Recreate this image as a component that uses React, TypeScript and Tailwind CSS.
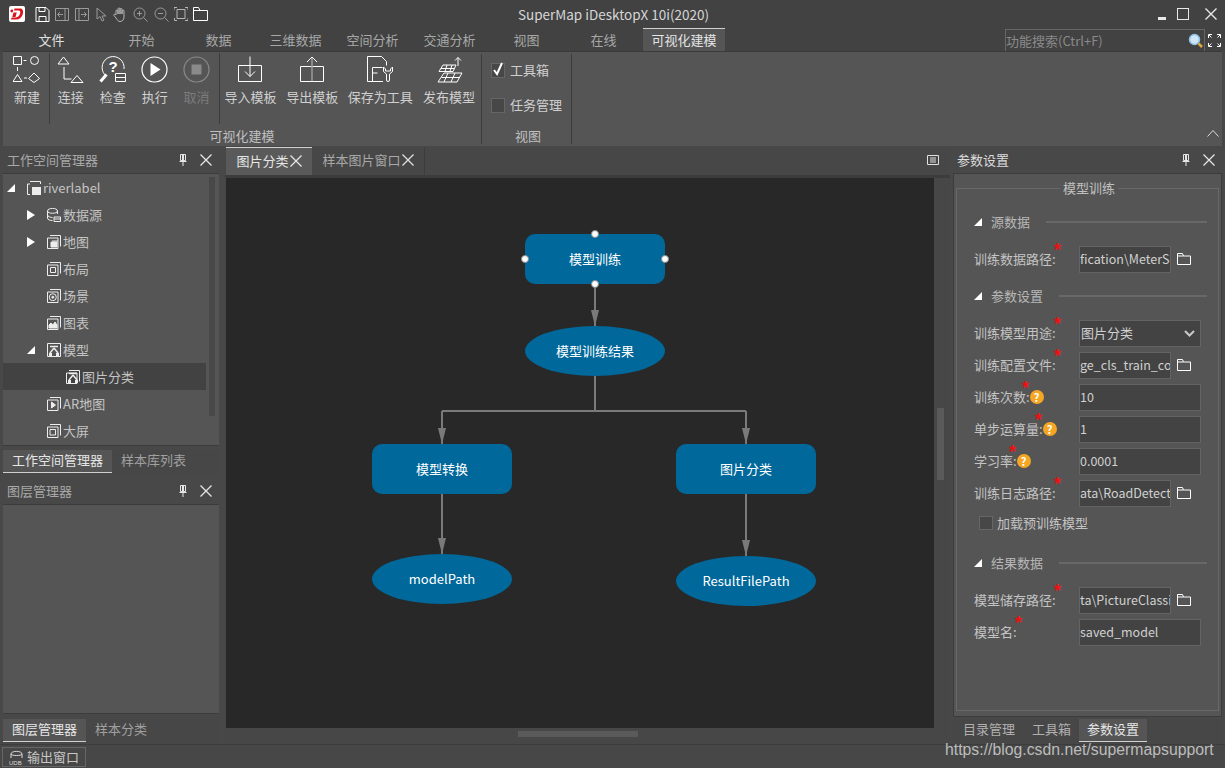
import type { ReactNode } from 'react'

const FONT = 'font-["Noto_Sans_CJK_SC","Microsoft_YaHei",sans-serif]'

const Svg = ({ w, h, children, className = '' }: { w: number; h: number; children: ReactNode; className?: string }) => (
  <svg width={w} height={h} viewBox={`0 0 ${w} ${h}`} fill="none" stroke="currentColor" strokeWidth="1" className={`shrink-0 ${className}`}>
    {children}
  </svg>
)

const Logo = () => (
  <Svg w={16} h={16}>
    <rect x="0" y="0" width="16" height="16" rx="2" fill="#fff" stroke="none" />
    <path d="M5.500 2.500h5.500c3 0 3.500 2.500 2.800 5.500-.8 3.500-3.300 5.500-6.800 5.500H2l.6-2h3.500c2.500 0 4.300-1.500 5-3.800.5-1.800.1-3.200-1.600-3.200H5z" fill="#d9141c" stroke="none" />
    <path d="M4.500 6.500h3.300L6.500 11H3.300z" fill="#d9141c" stroke="none" />
    <circle cx="2.800" cy="5" r="1.400" fill="#d9141c" stroke="none" />
  </Svg>
)

const ToolbarIcons = () => (
  <div className="flex items-center gap-[5px] ml-[10px]">
    <Svg w={15} h={15} className="text-white"><path d="M1 .5h10l3 3v11H1zM4 .5v4h6v-4M4 14.500v-5h7v5" /></Svg>
    <Svg w={15} h={15} className="text-[#9a9a9a]"><path d="M.5 1.500h13v12H.5zM10 1.500v12M8 7.500H2.500M5 5 2.500 7.500 5 10" /></Svg>
    <Svg w={15} h={15} className="text-[#9a9a9a]"><path d="M.5 1.500h13v12H.5zM4 1.500v12M6 7.500h5.500M9 5l2.500 2.500L9 10" /></Svg>
    <Svg w={12} h={15} className="text-[#9a9a9a] ml-[1px]"><path d="M1 1v11l3-2.500 2 4.500 2-1-2-4h4z" /></Svg>
    <Svg w={14} h={15} className="text-[#b5b5b5]"><path d="M3 8V4a1 1 0 0 1 2 0v3V2a1 1 0 0 1 2 0v5V2.500a1 1 0 0 1 2 0V7V4a1 1 0 0 1 2 0v6c0 3-2 4.500-4 4.500S4.500 13 3 11L1 8.500C.5 7 2 6.500 3 8z" /></Svg>
    <Svg w={15} h={15} className="text-[#9a9a9a] ml-[1px]"><circle cx="6.500" cy="6.500" r="5.500" /><path d="m10.500 10.500 4 4M4 6.500h5M6.500 4v5" /></Svg>
    <Svg w={15} h={15} className="text-[#9a9a9a] ml-[1px]"><circle cx="6.500" cy="6.500" r="5.500" /><path d="m10.500 10.500 4 4M4 6.500h5" /></Svg>
    <Svg w={14} h={14} className="text-[#b5b5b5]"><path d="M3 2.500h8v9H3zM0 3V.5h3M11 .5h3V3M14 11v2.500h-3M3 13.500H.5V11" /></Svg>
    <Svg w={15} h={14} className="text-white"><path d="M.5 13.500V.5h5l1.500 3h7.500v10zM.5 3.500H7" /></Svg>
  </div>
)

const TitleBar = () => (
  <div className="h-[28px] flex items-center pl-[9px] relative bg-[#424242]">
    <Logo />
    <ToolbarIcons />
    <div className="flex-1 text-center text-[13.500px] text-[#d6d6d6] mr-[139px]">SuperMap iDesktopX 10i(2020)</div>
    <div className="flex items-center text-[#e8e8e8] pr-[8px]">
      <div className="w-[8px] h-[3px] bg-[#e8e8e8] mt-[8px] mr-[11px]" />
      <div className="w-[12px] h-[12px] border border-[#e8e8e8] mr-[16px]" />
      <Svg w={12} h={12}><path d="m.5.5 11 11M11.500.5l-11 11" strokeWidth="1.400" /></Svg>
    </div>
  </div>
)

const tabs = [
  { label: '文件', cls: 'w-[103px] text-[#e0e0e0]' },
  { label: '开始', cls: 'w-[77px]' },
  { label: '数据', cls: 'w-[77px]' },
  { label: '三维数据', cls: 'w-[77px]' },
  { label: '空间分析', cls: 'w-[77px]' },
  { label: '交通分析', cls: 'w-[77px]' },
  { label: '视图', cls: 'w-[77px]' },
  { label: '在线', cls: 'w-[77px]' },
]

const TabRow = () => (
  <div className="h-[23px] flex items-end bg-[#424242]">
    {tabs.map(t => (
      <div key={t.label} className={`${t.cls} h-[23px] flex items-center justify-center text-[13px] ${t.label === '文件' ? '' : 'text-[#a8a8a8]'}`}>
        {t.label}
      </div>
    ))}
    <div className="ml-[1px] w-[82px] h-[23px] flex items-center justify-center text-[13px] text-[#e4e4e4] bg-[#555555] border-t border-[#d0d0d0]">可视化建模</div>
    <div className="ml-[280px] w-[200px] h-[22px] border-x border-t border-[#666666] flex items-center justify-between pr-[1px] text-[13px] text-[#8a8a8a]">
      功能搜索(Ctrl+F)
      <Svg w={15} h={16}>
        <circle cx="6.500" cy="6.500" r="5" fill="#cfe6f7" stroke="#8fc1e6" strokeWidth="1.500" />
        <path d="m10.500 10.500 3.500 3.500" stroke="#e0a93a" strokeWidth="2.500" />
      </Svg>
    </div>
    <Svg w={13} h={13} className="ml-[3px] mb-[4px] text-white">
      <path d="M.5 4V.5H4M9 .5h3.500V4M12.500 9v3.500H9M4 12.500H.5V9M1 1l2.500 2.500M12 1 9.500 3.500M12 12 9.500 9.500M1 12l2.500-2.500" />
    </Svg>
  </div>
)

const RibbonButton = ({ w, label, icon, dim }: { w: string; label: string; icon: ReactNode; dim?: boolean }) => (
  <div className={`${w} flex flex-col items-center`}>
    <div className="h-[32px] flex items-center justify-center text-white">{icon}</div>
    <div className={`mt-[2px] h-[20px] leading-[20px] text-[13px] whitespace-nowrap ${dim ? 'text-[#7c7c7c]' : 'text-[#d0d0d0]'}`}>{label}</div>
  </div>
)

const Sep = () => <div className="w-[1px] h-[71px] bg-[#3c3c3c] shrink-0" />

const Ribbon = () => (
  <div className="h-[95px] mx-[3px] bg-[#555555] border-t border-[#3a3a3a] flex relative">
    <div className="w-[478px] flex flex-col shrink-0">
      <div className="h-[73px] flex pt-[1px]">
        <RibbonButton w="w-[46px] pl-[2px]" label="新建" icon={
          <Svg w={27} h={27}>
            <path d="M.5.500h8v8h-8z" /><circle cx="21.500" cy="4.500" r="4" /><path d="M4.500 11v4M10.500 4.500h3M4.500 18.500l4.500 7H0zM11 22h3M21 17l5.500 5.500L21 26.500l-5.500-4z" />
          </Svg>
        } />
        <Sep />
        <RibbonButton w="w-[42px]" label="连接" icon={
          <Svg w={27} h={27}>
            <path d="m6.500 1 5.500 7H1zM7 11v12h7.500M20 19.500l6 7H14z" />
          </Svg>
        } />
        <RibbonButton w="w-[42px]" label="检查" icon={
          <Svg w={28} h={27}>
            <path d="M6 19A11 11 0 1 1 25 13" /><path d="M7.500 18.500 1.500 25.500" strokeWidth="3" />
            <path d="M16.500 17.500h10v4h-10zM16.500 21.500h10v4h-10z" />
            <text x="9.500" y="15.500" fontSize="15" fontWeight="700" fontFamily="Liberation Sans" fill="currentColor" stroke="none">?</text>
          </Svg>
        } />
        <RibbonButton w="w-[42px]" label="执行" icon={
          <Svg w={27} h={27}>
            <circle cx="13.500" cy="13.500" r="12.500" strokeWidth="1.200" /><path d="M9.500 7v13l10-6.500z" fill="currentColor" stroke="none" />
          </Svg>
        } />
        <RibbonButton w="w-[42px]" dim label="取消" icon={
          <Svg w={27} h={27} className="text-[#8a8a8a]">
            <circle cx="13.500" cy="13.500" r="12.500" strokeWidth="1.200" /><path d="M8.500 8.500h10v10h-10z" fill="currentColor" stroke="none" />
          </Svg>
        } />
        <div className="w-[1px] h-[71px] bg-[#3c3c3c] ml-[1px] shrink-0" />
        <RibbonButton w="w-[62px]" label="导入模板" icon={
          <Svg w={25} h={27}>
            <path d="M.5 9.500h23v16H.500z" /><path d="M12 .5v20M7 15.500l5 5 5-5" />
          </Svg>
        } />
        <RibbonButton w="w-[62px]" label="导出模板" icon={
          <Svg w={25} h={27}>
            <path d="M.5 10.500h23v15H.500z" /><path d="M12 25V1" stroke="#9a9a9a" strokeWidth="1.500" /><path d="M7 6l5-5 5 5" />
          </Svg>
        } />
        <RibbonButton w="w-[74px]" label="保存为工具" icon={
          <Svg w={26} h={26}>
            <path d="M16 25.500H.5V.5h14l5 5v4M5.500 25.500v-14h10M5.500 17h5" />
            <path d="M16.500 11v4.500l3 2.500v6a1.500 1.500 0 0 0 3 0v-6l3-2.500V11L23.500 13v2h-5v-2z" />
          </Svg>
        } />
        <RibbonButton w="w-[64px]" label="发布模型" icon={
          <Svg w={27} h={27}>
            <path d="M7 9h13l-3 6.500H3zM5 12.500h13.500M11 9l-2 6.500M16 9l-2 6.500M8 17h18l-5 9H2zM5.500 21.500h18M12 17l-4 9M19 17l-4 9M22 10V1.500M19 4.500l3-3 3 3" />
          </Svg>
        } />
      </div>
      <div className="flex-1 flex items-center justify-center text-[13px] text-[#c0c0c0] pt-[1px]">可视化建模</div>
    </div>
    <div className="w-[1px] h-[90px] bg-[#3c3c3c] mt-[2px]" />
    <div className="w-[89px] flex flex-col shrink-0 pl-[9px] pt-[10px]">
      <div className="flex items-center h-[16px] gap-[5px] text-[13px] text-[#d0d0d0]">
        <div className="w-[14px] h-[15px] bg-[#474747] border border-[#666666] flex items-center justify-center">
          <Svg w={12} h={14} className="text-white -mt-[3px]"><path d="m2 8 3 4 5-11" strokeWidth="2" /></Svg>
        </div>
        工具箱
      </div>
      <div className="flex items-center h-[16px] gap-[5px] text-[13px] text-[#d0d0d0] mt-[19px]">
        <div className="w-[14px] h-[15px] bg-[#474747] border border-[#666666]" />
        任务管理
      </div>
      <div className="text-[13px] text-[#c0c0c0] text-center mt-[13px] pr-[6px]">视图</div>
    </div>
    <div className="w-[1px] h-[90px] bg-[#3c3c3c] mt-[2px]" />
    <Svg w={12} h={7} className="absolute right-[3px] bottom-[9px] text-[#dcdcdc]"><path d="m.5 6.500 5.500-6 5.500 6" /></Svg>
  </div>
)

const PanelHeader = ({ title, light }: { title: string; light?: boolean }) => (
  <div className={`h-[27px] flex items-center justify-between pl-[4px] pr-[7px] border-b border-[#3c3c3c] text-[13px] ${light ? 'text-[#dcdcdc]' : 'text-[#a8a8a8]'}`}>
    {title}
    <div className="flex items-center gap-[13px] text-[#e6e6e6]">
      <Svg w={8} h={12}><path d="M1.500.5h5v6h-5zM.5 7.500h7M4 8v4" /><path d="M3 1h2v6H3z" fill="currentColor" stroke="none" /></Svg>
      <Svg w={12} h={12}><path d="m.5.5 11 11M11.500.5l-11 11" strokeWidth="1.300" /></Svg>
    </div>
  </div>
)

const Tri = ({ open }: { open: boolean }) =>
  open ? (
    <Svg w={8} h={8} className="text-white"><path d="M8 0v8H0z" fill="currentColor" stroke="none" /></Svg>
  ) : (
    <Svg w={8} h={10} className="text-white"><path d="M0 0l8 5-8 5z" fill="currentColor" stroke="none" /></Svg>
  )

const TreeGlyph = ({ kind }: { kind: string }) => (
  <Svg w={14} h={14} className="text-[#ededed] mr-[2px]">
    {kind === 'db' ? (
      <path d="M.5 3c0-3.500 10-3.500 10 0M.5 3c0 3 10 3 10 0v3M.5 3v7c0 2 3 2.500 5 2.500M.5 7c0 1.500 3 2.500 5 2.500M7 9h6.500v4.500H7zM7 11h6.500" />
    ) : (
      <>
        <path d="M3 .5h10.500v11M.5 3h10.500v10.500H.500z" />
        {kind === 'map' && <path d="M4 7h6v5H4zM5 6h6" fill="currentColor" />}
        {kind === 'layout' && <path d="M3.500 5.500h5v5h-5z" />}
        {kind === 'scene' && <><circle cx="5.800" cy="8.200" r="3.500" /><circle cx="5.800" cy="8.200" r="1" fill="currentColor" /></>}
        {kind === 'chart' && <path d="M2 12V9l2-2 2 2 2-3 2 3v3z" fill="currentColor" />}
        {kind === 'play' && <path d="M4.500 5v6l4-3z" fill="currentColor" />}
        {kind === 'screen' && <path d="M3 5.500h5.500v5.500H3z" />}
      </>
    )}
  </Svg>
)

const ModelGlyph = ({ stack }: { stack?: boolean }) => (
  <Svg w={14} h={14} className="text-[#ededed] mr-[2px]">
    {stack ? <path d="M3 .5h10.500v11M.5 3h10.500v10.500H.500z" /> : <path d="M.5.5h13v13H.500z" />}
    <path d="M3 3.500h8M7 5 3 10M7 5l4 5" strokeWidth="1.500" />
    <path d="M2 10h3v3H2zM9 10h3v3H9z" fill="currentColor" stroke="none" />
  </Svg>
)

const TreeRow = ({ pad, tri, icon, label, selected }: { pad: string; tri?: ReactNode; icon: ReactNode; label: string; selected?: boolean }) => (
  <div className={`h-[27px] flex items-center text-[13px] text-[#c4c4c4] ${selected ? 'bg-[#424242]' : ''}`}>
    <div className={`${pad} shrink-0 flex items-center`}>{tri}</div>
    {icon}
    {label}
  </div>
)

const WorkspacePanel = () => (
  <div className="h-[299px] flex flex-col">
    <PanelHeader title="工作空间管理器" />
    <div className="flex-1 bg-[#555555] border-b border-[#3c3c3c] flex overflow-hidden">
      <div className="w-[203px] shrink-0">
        <TreeRow pad="w-[25px] pl-[4px]" tri={<Tri open />} icon={
          <Svg w={14} h={14} className="text-[#ededed] mr-[2px] -ml-[1px]"><path d="M3 .5h10.500V3M.5 13.500V3H3M.5 13.500H3" /><path d="M5 6h9v8H5z" fill="currentColor" stroke="none" /></Svg>
        } label="riverlabel" />
        <TreeRow pad="w-[44px] pl-[24px]" tri={<Tri open={false} />} icon={<TreeGlyph kind="db" />} label="数据源" />
        <TreeRow pad="w-[44px] pl-[24px]" tri={<Tri open={false} />} icon={<TreeGlyph kind="map" />} label="地图" />
        <TreeRow pad="w-[44px]" icon={<TreeGlyph kind="layout" />} label="布局" />
        <TreeRow pad="w-[44px]" icon={<TreeGlyph kind="scene" />} label="场景" />
        <TreeRow pad="w-[44px]" icon={<TreeGlyph kind="chart" />} label="图表" />
        <TreeRow pad="w-[44px] pl-[24px]" tri={<Tri open />} icon={<ModelGlyph />} label="模型" />
        <TreeRow pad="w-[63px]" selected icon={<ModelGlyph stack />} label="图片分类" />
        <TreeRow pad="w-[44px]" icon={<TreeGlyph kind="play" />} label="AR地图" />
        <TreeRow pad="w-[44px]" icon={<TreeGlyph kind="screen" />} label="大屏" />
      </div>
      <div className="w-[6px] h-[239px] bg-[#484848] mt-[3px] ml-[3px]" />
    </div>
  </div>
)

const BottomTabs = ({ first, second, firstW, className = '' }: { first: string; second: string; firstW: string; className?: string }) => (
  <div className={`h-[24px] flex items-stretch bg-[#474747] text-[13px] ${className}`}>
    <div className={`${firstW} h-[23px] pb-[3px] flex items-center justify-center bg-[#555555] text-[#e6e6e6] border-b border-[#d0d0d0]`}>{first}</div>
    <div className="ml-[9px] pb-[5px] flex items-center text-[#a0a0a0]">{second}</div>
  </div>
)

const Left = () => (
  <div className="w-[216px] ml-[3px] flex flex-col shrink-0">
    <WorkspacePanel />
    <BottomTabs first="工作空间管理器" second="样本库列表" firstW="w-[109px]" className="mt-[4px]" />
    <div className="mt-[4px] flex flex-col">
      <PanelHeader title="图层管理器" />
      <div className="h-[209px] bg-[#555555] border-b border-[#3c3c3c]" />
    </div>
    <BottomTabs first="图层管理器" second="样本分类" firstW="w-[83px]" className="mt-[5px]" />
  </div>
)

const Handle = ({ cls }: { cls: string }) => (
  <div className={`absolute w-[8px] h-[8px] rounded-full bg-white border border-[#8a8a8a] ${cls}`} />
)

const nodeBase = 'absolute w-[140px] h-[50px] bg-[#00689a] flex items-center justify-center text-[13px] text-white'

const Canvas = () => (
  <div className="relative w-[708px] h-[550px] bg-[#282828] overflow-hidden">
    <svg className="absolute left-0 top-0" width="708" height="550" fill="none" stroke="#7a7a7a" strokeWidth="2">
      <path d="M369 106v42M369 198v35M216 233h304M216 233v33M520 233v33M216 316v60M520 316v62" />
      <g fill="#7a7a7a" stroke="none">
        <path d="M365 132h8l-4 16zM212 250h8l-4 16zM516 250h8l-4 16zM212 360h8l-4 16zM516 362h8l-4 16z" />
      </g>
    </svg>
    <div className={`${nodeBase} left-[299px] top-[56px] rounded-[10px]`}>模型训练</div>
    <Handle cls="left-[365px] top-[52px]" />
    <Handle cls="left-[295px] top-[77px]" />
    <Handle cls="left-[435px] top-[77px]" />
    <Handle cls="left-[365px] top-[102px]" />
    <div className={`${nodeBase} left-[299px] top-[148px] rounded-[50%]`}>模型训练结果</div>
    <div className={`${nodeBase} left-[146px] top-[266px] rounded-[10px]`}>模型转换</div>
    <div className={`${nodeBase} left-[450px] top-[266px] rounded-[10px]`}>图片分类</div>
    <div className={`${nodeBase} left-[146px] top-[376px] rounded-[50%]`}>modelPath</div>
    <div className={`${nodeBase} left-[450px] top-[378px] rounded-[50%]`}>ResultFilePath</div>
  </div>
)

const Center = () => (
  <div className="w-[725px] ml-[6px] flex flex-col shrink-0 bg-[#474747]">
    <div className="h-[28px] flex items-stretch text-[13px] pl-[1px]">
      <div className="w-[86px] pb-[2px] flex items-center justify-center gap-[1px] bg-[#5a5a5a] border-t border-[#d0d0d0] text-[#e6e6e6]">
        图片分类
        <Svg w={12} h={12}><path d="m.5.5 11 11M11.500.5l-11 11" strokeWidth="1.300" /></Svg>
      </div>
      <div className="w-[113px] pb-[2px] flex items-center justify-center gap-[1px] text-[#a8a8a8] border-r border-[#3c3c3c]">
        样本图片窗口
        <Svg w={12} h={12} className="text-[#e0e0e0]"><path d="m.5.5 11 11M11.500.5l-11 11" strokeWidth="1.300" /></Svg>
      </div>
      <div className="flex-1 flex items-center justify-end pr-[11px] pb-[3px]">
        <Svg w={12} h={10} className="text-[#e0e0e0]"><path d="M.5.5h11v9H.500zM3 3h6M3 5h6M3 7h6" /></Svg>
      </div>
    </div>
    <div className="h-[3px] bg-[#3c3c3c]" />
    <div className="flex flex-1 pl-[1px]">
      <Canvas />
      <div className="w-[7px] h-[72px] bg-[#5a5a5a] ml-[3px] mt-[230px]" />
    </div>
    <div className="h-[16px] pl-[293px] pt-[3px]">
      <div className="w-[120px] h-[6px] bg-[#5a5a5a]" />
    </div>
  </div>
)

const Star = ({ cls }: { cls: string }) => (
  <span className={`absolute top-[-8px] text-[18px] leading-none font-bold text-[#ee1111] font-["Liberation_Sans",sans-serif] ${cls}`}>*</span>
)

const Help = () => (
  <span className="w-[14px] h-[14px] rounded-full bg-[#f5a623] text-white text-[11px] font-bold flex items-center justify-center shrink-0">?</span>
)

const Folder = () => (
  <Svg w={14} h={12} className="ml-[6px] text-white"><path d="M.5 11.500V.5h5l1 2.500h7v8.500zM.5 3h6" /></Svg>
)

const inputCls = 'h-[27px] bg-[#434343] border border-[#636363] text-[12.500px] text-[#d0d0d0] flex items-center overflow-hidden whitespace-nowrap'

const Field = ({ label, star, help, value, folder, select }: { label: string; star: string; help?: boolean; value: string; folder?: boolean; select?: boolean }) => (
  <div className="h-[32px] flex items-center">
    <div className="w-[105px] flex items-center text-[13px] text-[#c4c4c4] relative shrink-0">
      {label}
      {help && <Help />}
      <Star cls={star} />
    </div>
    <div className={`${inputCls} ${folder ? 'w-[92px]' : 'w-[122px]'}`}>
      {select ? (
        <div className="w-full flex items-center justify-between pl-[1px] pr-[5px] text-[13px]">
          {value}
          <Svg w={11} h={7} className="text-[#c8c8c8]"><path d="m1 1 4.500 4.500L10 1" strokeWidth="2" /></Svg>
        </div>
      ) : (
        value
      )}
    </div>
    {folder && <Folder />}
  </div>
)

const Section = ({ title, cls }: { title: string; cls: string }) => (
  <div className={`h-[22px] flex items-center text-[13px] text-[#b8b8b8] ${cls}`}>
    <Tri open />
    <span className="ml-[9px]">{title}</span>
    <div className="flex-1 h-[2px] bg-[#686868] ml-[16px]" />
  </div>
)

const Right = () => (
  <div className="w-[269px] ml-[3px] flex flex-col shrink-0">
    <div className="h-[27px]"><PanelHeader title="参数设置" light /></div>
    <div className="h-[545px] bg-[#555555] border border-[#3c3c3c] border-t-0 px-[2px] pt-[14px] pb-[2px]">
      <div className="relative h-[523px] border border-[#696969] pl-[17px] pr-[11px] pt-[22px]">
        <div className="absolute left-[103px] top-[-9px] px-[3px] bg-[#555555] text-[13px] leading-[16px] text-[#c0c0c0]">模型训练</div>
        <Section title="源数据" cls="" />
        <div className="mt-[10px]">
          <Field label="训练数据路径:" star="left-[80px]" value="fication\MeterSe" folder />
        </div>
        <Section title="参数设置" cls="mt-[10px]" />
        <div className="mt-[10px]">
          <Field label="训练模型用途:" star="left-[80px]" value="图片分类" select />
          <Field label="训练配置文件:" star="left-[80px]" value="ge_cls_train_con" folder />
          <Field label="训练次数:" star="left-[48px]" help value="10" />
          <Field label="单步运算量:" star="left-[61px]" help value="1" />
          <Field label="学习率:" star="left-[35px]" help value="0.0001" />
          <Field label="训练日志路径:" star="left-[80px]" value="ata\RoadDetect" folder />
        </div>
        <div className="h-[22px] mt-[3px] ml-[5px] flex items-center gap-[4px] text-[13px] text-[#c4c4c4]">
          <div className="w-[14px] h-[14px] bg-[#474747] border border-[#666666]" />
          加载预训练模型
        </div>
        <Section title="结果数据" cls="mt-[18px]" />
        <div className="mt-[10px]">
          <Field label="模型储存路径:" star="left-[80px]" value="ta\PictureClassi" folder />
          <Field label="模型名:" star="left-[41px]" value="saved_model" />
        </div>
      </div>
    </div>
    <div className="h-[25px] mt-[2px] flex items-stretch bg-[#474747] text-[13px] text-[#b0b0b0] pl-[10px]">
      <div className="flex items-center pb-[5px]">目录管理</div>
      <div className="flex items-center ml-[17px] pb-[5px]">工具箱</div>
      <div className="w-[68px] h-[23px] pb-[3px] ml-[8px] flex items-center justify-center bg-[#555555] text-[#e6e6e6] border-b border-[#d0d0d0]">参数设置</div>
    </div>
  </div>
)

const StatusBar = () => (
  <div className="h-[24px] bg-[#474747] border-t border-[#3c3c3c] flex items-center pl-[2px] relative">
    <div className="w-[84px] h-[20px] border border-[#666666] flex items-center justify-center gap-[3px] text-[13px] text-[#c8c8c8]">
      <Svg w={15} h={16} className="text-[#dcdcdc]">
        <path d="M2 5C2 1.500 13 1.500 13 5v4M2 5c0 2 11 2 11 0M2 5v4" />
        <text x="0" y="15.500" fontSize="6" fill="currentColor" stroke="none" fontFamily="Liberation Sans">UDB</text>
      </Svg>
      输出窗口
    </div>
    <div className='absolute left-[945px] top-[-5px] text-[15.800px] leading-[20px] text-[#bcbcbc] font-["Liberation_Sans",sans-serif] whitespace-nowrap'>
      https://blog.csdn.net/supermapsupport
    </div>
  </div>
)

const App = () => {
  return (
    <div className={`w-screen h-screen overflow-hidden bg-[#474747] flex flex-col ${FONT}`}>
      <TitleBar />
      <TabRow />
      <Ribbon />
      <div className="h-[598px] flex pt-[1px] bg-[#484848]">
        <Left />
        <Center />
        <Right />
      </div>
      <StatusBar />
    </div>
  )
}

export default App
